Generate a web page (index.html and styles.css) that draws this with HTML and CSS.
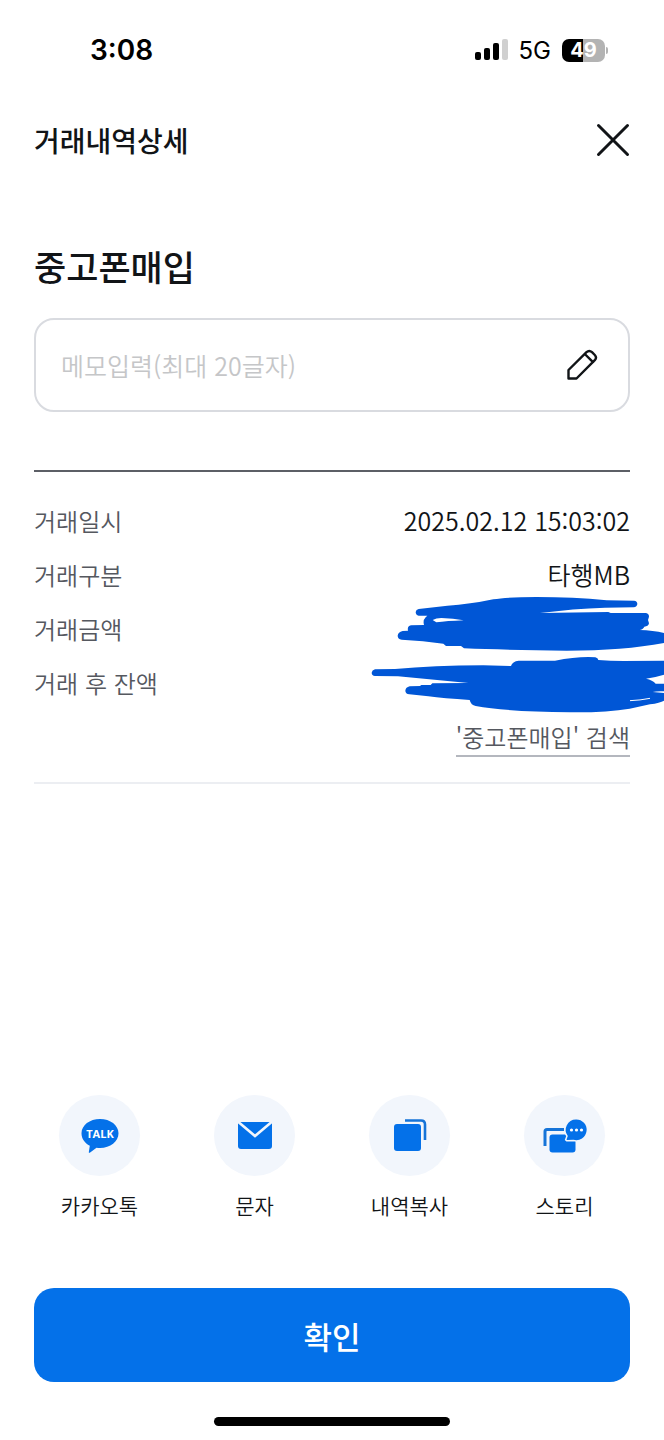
FILE: index.html
```html
<!DOCTYPE html>
<html lang="ko">
<head>
<meta charset="utf-8">
<meta name="viewport" content="width=device-width, initial-scale=1">
<title>거래내역상세</title>
<link rel="stylesheet" href="styles.css">
</head>
<body>
<div class="screen">
  <div class="status">
    <span class="clock">3:08</span>
    <div class="status-right">
      <svg class="signal" viewBox="0 0 33 22" aria-hidden="true">
        <rect x="0" y="13" width="6" height="8" rx="2"/>
        <rect x="9" y="9" width="6" height="12" rx="2"/>
        <rect x="18" y="4" width="6" height="17" rx="2"/>
        <rect x="27" y="0" width="6" height="21" rx="2" fill="#d0d0d0"/>
      </svg>
      <span class="network">5G</span>
      <div class="battery"><span class="level">49</span><span class="cap"></span></div>
    </div>
  </div>

  <header class="header">
    <h1 class="title">거래내역상세</h1>
    <button class="close" type="button" aria-label="닫기">
      <svg class="close-icon" viewBox="0 0 34 34"><path d="M2.5 2.5 31.500 31.500M31.500 2.500 2.500 31.500" fill="none" stroke="#111417" stroke-width="3" stroke-linecap="round"/></svg>
    </button>
  </header>

  <main class="content">
    <h2 class="name">중고폰매입</h2>
    <div class="memo">
      <input class="memo-input" type="text" maxlength="20" placeholder="메모입력(최대 20글자)" aria-label="메모입력">
      <button class="edit" type="button" aria-label="메모 수정">
        <svg class="edit-icon" viewBox="0 0 32 32" fill="none" stroke="#111417" stroke-width="2.400" stroke-linejoin="round" stroke-linecap="round"><path d="M2.500 29.500V21L20.500 3.200Q23.200.700 26 3.200L28.800 6Q31.200 8.600 28.800 11.200L10.500 29.500ZM18.800 5 27 13.200"/></svg>
      </button>
    </div>

    <section class="details">
      <dl class="rows">
        <div class="row"><dt>거래일시</dt><dd>2025.02.12 15:03:02</dd></div>
        <div class="row"><dt>거래구분</dt><dd>타행MB</dd></div>
        <div class="row"><dt>거래금액</dt><dd></dd></div>
        <div class="row"><dt>거래 후 잔액</dt><dd></dd></div>
      </dl>
      <a class="search" href="#search">'중고폰매입' 검색</a>
      <svg class="scribble" viewBox="0 309 912 369" aria-hidden="true">
        <path fill="#0056d6" d="M176 357 L262 347 Q330 343 400 328 Q440 321 530 321 Q640 321 740 331 L822 332 Q832 333 832 342 Q831 351 821 352 L735 353 Q640 356 540 369 L745 366 L752 369 L858 369 Q867 371 867 380 L864 390 L867 400 Q865 410 853 410 Q849 419 838 420 Q880 421 912 429 V459 Q790 482 620 482 Q440 480 312 475 L303 468 L258 468 L250 461 Q190 452 125 449 Q113 447 113 437 Q114 426 128 423 L144 422 Q141 408 153 406 L192 405 Q188 391 197 382 L202 377 L176 377 Q167 375 167 366 Q168 359 176 357Z"/>
        <path fill="#fff" d="M218 390 Q228 384 244 384 Q280 385 311 391 Q260 393 229 397Z"/>
        <path fill="#0056d6" d="M45 538 L105 537 Q220 527 370 526 L453 528 Q457 514 476 512 L585 512 Q640 501 685 501 L706 502 Q714 504 715 510 Q750 513 790 513 L912 512 V554 Q890 561 858 566 Q878 570 887 581 L912 581 V604 Q890 603 878 606 L912 609 V632 Q900 639 870 643 L809 656 Q740 668 630 667 Q440 665 347 648 Q333 646 329 630 Q250 625 205 619 L148 613 Q136 611 136 602 Q137 592 149 589 L180 588 L184 585 L212 585 L217 580 L325 579 L114 559 L45 558 Q35 557 35 548 Q36 540 45 538Z"/>
        <path d="M810 632 Q840 631 870 625" fill="none" stroke="#fff" stroke-width="3"/>
      </svg>
    </section>
  </main>

  <footer class="footer">
    <nav class="shares" aria-label="공유">
      <button class="share" type="button">
        <span class="disc"><svg class="share-icon" viewBox="0 0 81 81"><path fill="#0471e9" d="M41 24c10.300 0 18.500 6.200 18.500 14.300S51.300 53 41 53c-1.200 0-2.400 0-3.500-.200L30.800 57.700q-1 .500-1-.500l1-6.500C25.800 48.200 22.500 43.900 22.500 38.300 22.500 30.200 30.700 24 41 24Z"/><text class="talk" x="41" y="43" text-anchor="middle">TALK</text></svg></span>
        <span>카카오톡</span>
      </button>
      <button class="share" type="button">
        <span class="disc"><svg class="share-icon" viewBox="0 0 81 81"><path fill="#0471e9" d="M24 27H58V51q0 3-3 3H27q-3 0-3-3Z"/><path d="M23.500 26.300 41 41 58.500 26.300" fill="none" stroke="#f2f6fc" stroke-width="2.600"/></svg></span>
        <span>문자</span>
      </button>
      <button class="share" type="button">
        <span class="disc"><svg class="share-icon" viewBox="0 0 81 81"><rect x="25" y="29" width="27" height="27" rx="3" fill="#0471e9"/><path d="M36 25.500H52Q56 25.500 56 29.500V45" fill="none" stroke="#1674d8" stroke-width="2.600"/></svg></span>
        <span>내역복사</span>
      </button>
      <button class="share" type="button">
        <span class="disc"><svg class="share-icon" viewBox="0 0 81 81"><path d="M21 51V36.500Q21 34.500 23 34.500H40" fill="none" stroke="#1674d8" stroke-width="3"/><rect x="25.500" y="39.500" width="26" height="18" rx="3" fill="#0471e9"/><path d="M52 24.500a10.300 10.300 0 1 1-2.500 20.200L43 45l-.500-.500 1.300-3.500A10.300 10.300 0 0 1 52 24.500Z" fill="#0471e9" stroke="#f2f6fc" stroke-width="3" paint-order="stroke"/><g fill="#fff"><circle cx="47.500" cy="35" r="1.600"/><circle cx="52.500" cy="35" r="1.600"/><circle cx="57.500" cy="35" r="1.600"/></g></svg></span>
        <span>스토리</span>
      </button>
    </nav>
    <button class="confirm" type="button">확인</button>
    <div class="home"></div>
  </footer>
</div>
</body>
</html>
```
FILE: styles.css
```css
* { box-sizing: border-box; }
body {
  margin: 0;
  background: #fff;
  color: #111417;
  font-family: "Noto Sans CJK KR", sans-serif;
  font-size: 24px;
  font-weight: 350;
}
button, input { font: inherit; color: inherit; border: 0; padding: 0; background: none; }
h1, h2, dl, dd { margin: 0; }
svg { display: block; }
.screen { display: flex; flex-direction: column; min-height: 100vh; position: relative; overflow: hidden; }

.status {
  display: flex;
  justify-content: space-between;
  align-items: center;
  height: 100px;
  padding: 0 56px 0 90px;
  font-family: Inter, sans-serif;
  color: #000;
}
.clock { font-size: 28px; font-weight: 600; }
.status-right { display: flex; align-items: center; gap: 11px; }
.signal { width: 33px; height: 22px; }
.network { font-size: 24px; font-weight: 400; }
.battery { display: flex; align-items: center; gap: 1px; }
.level {
  width: 43px;
  border-radius: 7px;
  background: linear-gradient(90deg, #000 50%, #b3b3b3 50%);
  color: #fff;
  font-size: 20px;
  font-weight: 700;
  line-height: 23px;
  text-align: center;
}
.cap { width: 2px; height: 7px; border-radius: 0 2px 2px 0; background: #b3b3b3; }

.header { display: flex; justify-content: space-between; align-items: center; height: 80px; padding: 0 34px; }
.title { font-size: 28px; font-weight: 500; line-height: 40px; }
.close-icon { width: 34px; height: 34px; }

.content { padding: 60px 34px 0; }
.name { font-size: 35px; font-weight: 500; line-height: 52px; }
.memo {
  display: flex;
  align-items: center;
  height: 94px;
  margin-top: 26px;
  padding: 0 30px 0 25px;
  border: 2px solid #d9dbe0;
  border-radius: 20px;
}
.memo-input { flex: 1; min-width: 0; height: 48px; outline: 0; font-size: 25px; }
.memo-input::placeholder { color: #c5c6c8; opacity: 1; }
.edit-icon { width: 32px; height: 32px; }

.details {
  position: relative;
  display: flex;
  flex-direction: column;
  align-items: flex-end;
  margin-top: 58px;
  padding: 21px 0 25px;
  border-top: 2px solid #5c5f66;
  border-bottom: 2px solid #eceef2;
}
.rows { width: 100%; }
.row { display: flex; justify-content: space-between; align-items: center; height: 54px; }
.row dt { color: #55585f; }
.row dd { font-size: 25px; }
.search {
  margin-top: 10px;
  border-bottom: 2px solid #b4b7be;
  color: #55585f;
  line-height: 36px;
  text-decoration: none;
}
.scribble { position: absolute; top: 121px; right: -34px; width: 304px; height: 123px; }

.footer { margin-top: auto; padding: 0 34px 14px; }
.shares { display: grid; grid-template-columns: repeat(4, 1fr); margin: 0 -12px; }
.share { display: flex; flex-direction: column; align-items: center; gap: 13px; font-size: 21px; line-height: 32px; }
.disc { width: 81px; height: 81px; border-radius: 50%; background: #f2f6fc; }
.share-icon { width: 81px; height: 81px; }
.talk { fill: #fff; font: 700 11px "Open Sans", sans-serif; }
.confirm {
  display: block;
  width: 100%;
  height: 94px;
  margin-top: 67px;
  border-radius: 20px;
  background: #0471e9;
  color: #fff;
  font-size: 31px;
  font-weight: 500;
}
.home { width: 236px; height: 9px; margin: 35px auto 0; border-radius: 5px; background: #000; }
```
